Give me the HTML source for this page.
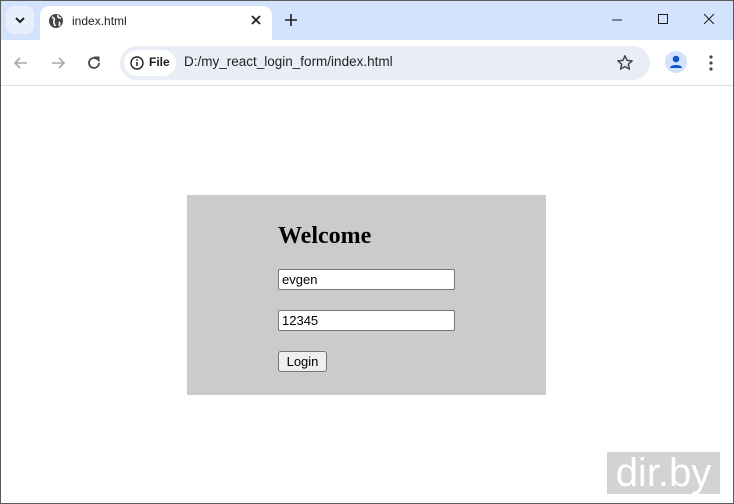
<!DOCTYPE html>
<html><head><meta charset="utf-8"><style>
*{margin:0;padding:0;box-sizing:border-box}
body{width:734px;height:504px;overflow:hidden;background:#fff;font-family:"Liberation Sans",sans-serif;position:relative}
.frame{position:absolute;inset:0;border:1px solid #5a5a5a;pointer-events:none;z-index:10}
.tabbar{position:absolute;left:0;top:0;width:734px;height:40px;background:#d3e3fd}
.tabbtn{position:absolute;left:6px;top:6px;width:28px;height:28px;border-radius:8px;background:#e8effc}
.tab{position:absolute;left:40px;top:6px;width:232px;height:34px;background:#fff;border-radius:10px 10px 0 0}
.tab .t{position:absolute;left:32px;top:8px;font-size:12px;color:#1f1f1f}
.toolbar{position:absolute;left:0;top:40px;width:734px;height:46px;background:#fff;border-bottom:1px solid #e0e0e0}
.omni{position:absolute;left:120px;top:6px;width:530px;height:34px;border-radius:17px;background:#e9eef6}
.chip{position:absolute;left:4px;top:4px;width:52px;height:26px;border-radius:13px;background:#fff}
.chip span{position:absolute;left:25px;top:5px;font-size:12px;color:#1f1f1f;font-weight:600}
.url{position:absolute;left:64px;top:8px;font-size:13.5px;color:#1f1f1f}
.box{position:absolute;left:187px;top:195px;width:359px;height:200px;background:#cbcbcb}
h2{position:absolute;left:91px;top:28px;font-family:"Liberation Serif",serif;font-size:24px;font-weight:bold;color:#000}
.in{position:absolute;left:91px;width:177px;height:21px;background:#fff;border:1px solid #767676;border-radius:2px;font-size:13px;padding:2px 3px;color:#000}
.btn{position:absolute;left:91px;top:156px;width:49px;height:21px;background:#efefef;border:1px solid #767676;border-radius:3px;font-size:13px;text-align:center;line-height:19px}
.wm{position:absolute;left:607px;top:452px;width:113px;height:42px;background:#d3d3d3;color:#fff;font-size:40px;line-height:42px;text-align:center}
</style></head><body>
<div class="tabbar">
 <div class="tabbtn"><svg width="28" height="28"><path d="M10 12l4 4 4-4" stroke="#1f1f1f" stroke-width="2" fill="none"/></svg></div>
 <div class="tab">
  <svg style="position:absolute;left:8px;top:7px" width="16" height="16" viewBox="0 0 16 16"><circle cx="8" cy="8" r="7" fill="#474747"/><path d="M4 4c2 1 3 2 2 4s1 3 1 5M10 2c-1 2 1 3 3 3M11 9c1 1 1 2 0 4" stroke="#fff" stroke-width="1.6" fill="none"/></svg>
  <span class="t">index.html</span>
  <svg style="position:absolute;left:209px;top:7px" width="14" height="14"><path d="M3 3l8 8M11 3l-8 8" stroke="#1f1f1f" stroke-width="1.8"/></svg>
 </div>
 <svg style="position:absolute;left:284px;top:13px" width="14" height="14"><path d="M7 1v12M1 7h12" stroke="#1f1f1f" stroke-width="1.6"/></svg>
 <svg style="position:absolute;left:610px;top:14px" width="14" height="12"><path d="M2 6h10" stroke="#1f1f1f"/></svg>
 <svg style="position:absolute;left:657px;top:13px" width="12" height="12"><rect x="1.5" y="1.5" width="9" height="9" fill="none" stroke="#1f1f1f"/></svg>
 <svg style="position:absolute;left:703px;top:13px" width="12" height="12"><path d="M1 1l10 10M11 1l-10 10" stroke="#1f1f1f"/></svg>
</div>
<div class="toolbar">
 <svg style="position:absolute;left:13px;top:15px" width="16" height="16"><path d="M14 8H2M7 3L2 8l5 5" stroke="#a8a8a8" stroke-width="1.6" fill="none"/></svg>
 <svg style="position:absolute;left:50px;top:15px" width="16" height="16"><path d="M2 8h12M9 3l5 5-5 5" stroke="#a8a8a8" stroke-width="1.6" fill="none"/></svg>
 <svg style="position:absolute;left:86px;top:15px" width="16" height="16"><path d="M13 8a5 5 0 1 1-1.5-3.6" stroke="#474747" stroke-width="1.8" fill="none"/><path d="M9 2h4v4z" fill="#474747" stroke="#474747"/></svg>
 <div class="omni">
  <div class="chip"><svg style="position:absolute;left:6px;top:6px" width="14" height="14"><circle cx="7" cy="7" r="6" fill="none" stroke="#1f1f1f" stroke-width="1.4"/><path d="M7 6v4" stroke="#1f1f1f" stroke-width="1.5"/><circle cx="7" cy="4" r="0.9" fill="#1f1f1f"/></svg><span>File</span></div>
  <span class="url">D:/my_react_login_form/index.html</span>
  <svg style="position:absolute;left:496px;top:8px" width="18" height="18" viewBox="0 0 18 18"><path d="M9 1.8l2.1 4.6 5 .5-3.8 3.3 1.1 4.9L9 12.5l-4.4 2.6 1.1-4.9L1.9 6.9l5-.5z" fill="none" stroke="#474747" stroke-width="1.5" stroke-linejoin="round"/></svg>
 </div>
 <div style="position:absolute;left:665px;top:11px;width:22px;height:22px;border-radius:50%;background:#d3e3fd"></div>
 <svg style="position:absolute;left:665px;top:11px" width="22" height="22"><circle cx="11" cy="8" r="3.3" fill="#0b57d0"/><path d="M5 17c0-4 12-4 12 0z" fill="#0b57d0"/></svg>
 <svg style="position:absolute;left:706px;top:14px" width="10" height="18"><circle cx="5" cy="3" r="1.6" fill="#474747"/><circle cx="5" cy="9" r="1.6" fill="#474747"/><circle cx="5" cy="15" r="1.6" fill="#474747"/></svg>
</div>
<div class="box">
 <h2>Welcome</h2>
 <div class="in" style="top:74px">evgen</div>
 <div class="in" style="top:115px">12345</div>
 <div class="btn">Login</div>
</div>
<div class="wm">dir.by</div>
<div class="frame"></div>
</body></html>
